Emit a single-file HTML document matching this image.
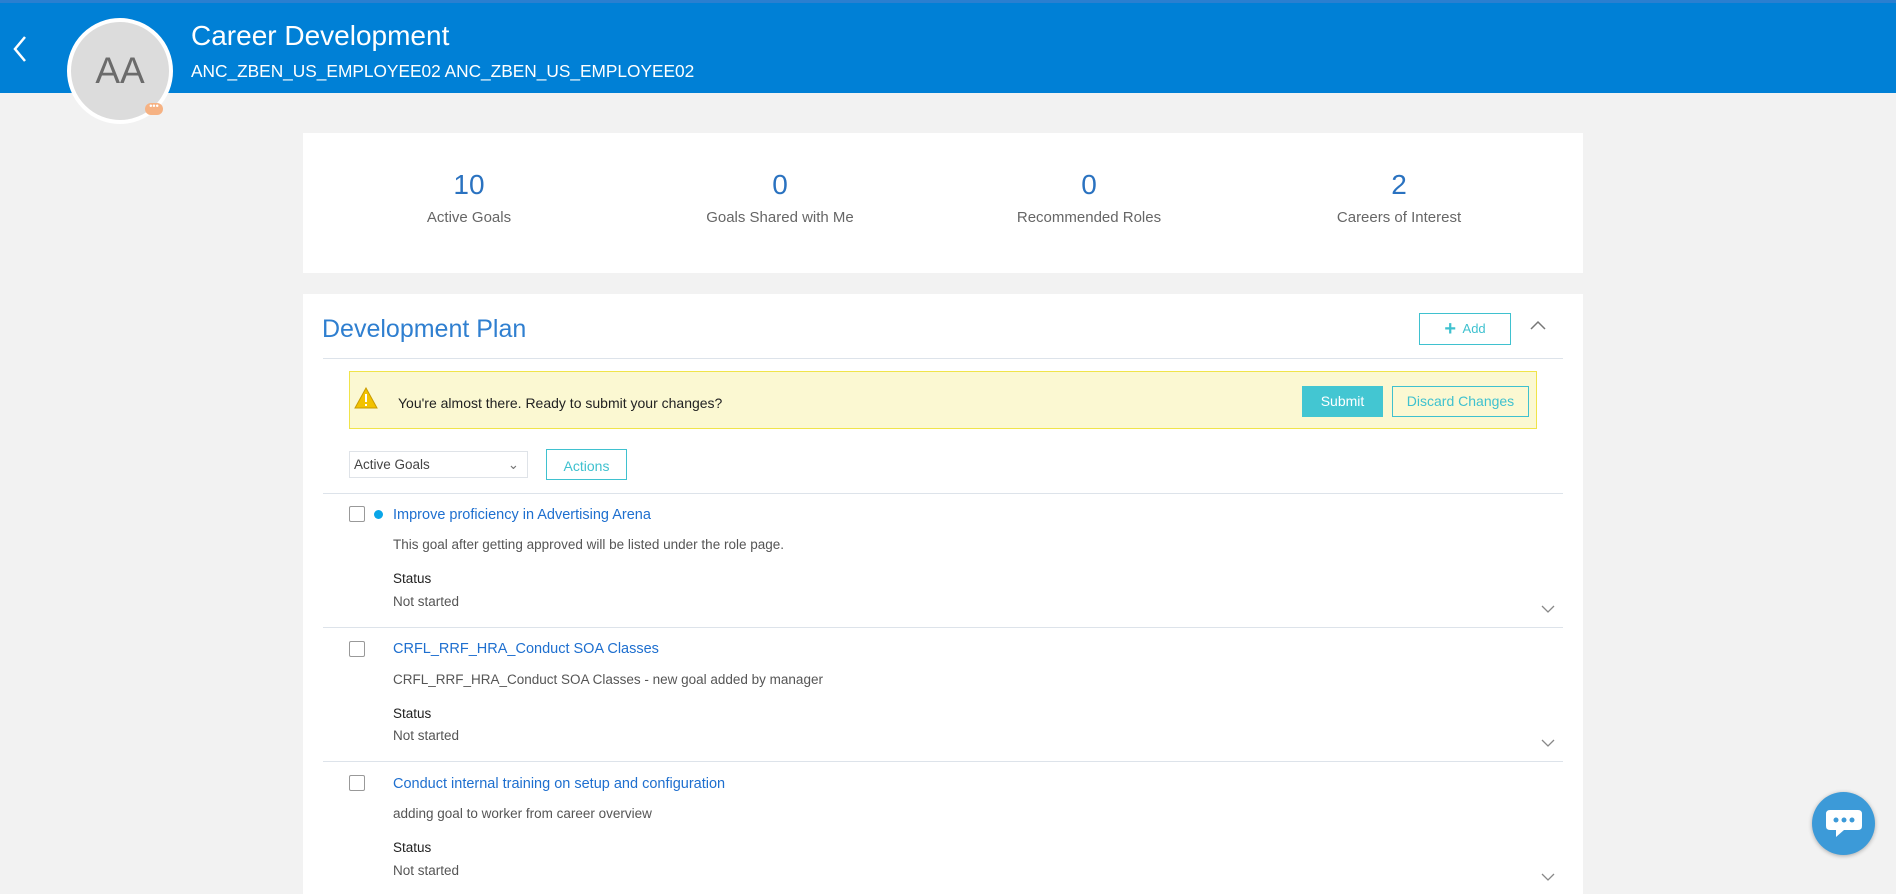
<!DOCTYPE html><html><head><style>
*{margin:0;padding:0;box-sizing:border-box}
body{width:1896px;height:882px;overflow:hidden;background:#f2f2f2;font-family:"Liberation Sans",sans-serif;position:relative}
.a{position:absolute}
.hdr{left:0;top:0;width:1896px;height:93px;background:#0080d6;border-top:3px solid #2a7fd0}
.stat{width:300px;text-align:center}
.num{font-size:28px;color:#2a72c0}
.lab{font-size:15px;color:#666;margin-top:8px}
.cb{width:16px;height:16px;border:1px solid #999;border-radius:2px;background:#fff}
.t{font-size:14.5px;color:#1e6fcf}
.d{font-size:13.5px;color:#555}
.s{font-size:13.5px;color:#222}
.hr{height:1px;background:#dde3ea;left:323px;width:1240px}
</style></head><body>
<div class="a hdr"></div>
<svg class="a" style="left:10px;top:34px" width="20" height="30"><path d="M15 3 L5 15 L15 27" stroke="#fff" stroke-width="2.5" fill="none"/></svg>
<div class="a" style="left:67px;top:18px;width:106px;height:106px;border-radius:50%;background:#dcdcdc;border:4px solid #fff;font-size:37px;color:#6b6b6b;text-align:center;line-height:98px">AA</div>
<div class="a" style="left:145px;top:103px;width:18px;height:12px;border-radius:6px;background:#f6b283;color:#fff;font-size:9px;line-height:6px;text-align:center">•••</div>
<div class="a" style="left:191px;top:20px;font-size:28px;color:#fff">Career Development</div>
<div class="a" style="left:191px;top:61px;font-size:17.3px;color:#fff">ANC_ZBEN_US_EMPLOYEE02 ANC_ZBEN_US_EMPLOYEE02</div>

<div class="a" style="left:303px;top:133px;width:1280px;height:140px;background:#fff"></div>
<div class="a stat" style="left:319px;top:169px"><div class="num">10</div><div class="lab">Active Goals</div></div>
<div class="a stat" style="left:630px;top:169px"><div class="num">0</div><div class="lab">Goals Shared with Me</div></div>
<div class="a stat" style="left:939px;top:169px"><div class="num">0</div><div class="lab">Recommended Roles</div></div>
<div class="a stat" style="left:1249px;top:169px"><div class="num">2</div><div class="lab">Careers of Interest</div></div>

<div class="a" style="left:303px;top:294px;width:1280px;height:600px;background:#fff"></div>
<div class="a" style="left:322px;top:315px;font-size:25px;color:#2f7fd0">Development Plan</div>
<div class="a" style="left:1419px;top:313px;width:92px;height:32px;border:1px solid #3fc1cf;color:#3fc1cf;font-size:13px;line-height:30px;text-align:center"><b style="font-size:20px;vertical-align:-2px">+</b>&nbsp; Add</div>
<svg class="a" style="left:1529px;top:319px" width="18" height="12"><path d="M2 10 L9 3 L16 10" stroke="#777" stroke-width="1.5" fill="none"/></svg>
<div class="a hr" style="top:358px"></div>
<div class="a" style="left:349px;top:371px;width:1188px;height:58px;background:#fbf8d2;border:1px solid #f0e44a"></div>
<svg class="a" style="left:354px;top:387px" width="24" height="22"><path d="M12 1 L23 21 L1 21 Z" fill="#f2c200" stroke="#c99b00"/><rect x="11" y="7" width="2" height="8" fill="#fff"/><rect x="11" y="17" width="2" height="2" fill="#fff"/></svg>
<div class="a s" style="left:398px;top:395px;font-size:14px">You're almost there. Ready to submit your changes?</div>
<div class="a" style="left:1302px;top:386px;width:81px;height:31px;background:#43c6d2;color:#fff;font-size:14px;line-height:31px;text-align:center">Submit</div>
<div class="a" style="left:1392px;top:386px;width:137px;height:31px;border:1px solid #3fc1cf;color:#3fc1cf;font-size:14px;line-height:29px;text-align:center">Discard Changes</div>
<div class="a" style="left:349px;top:451px;width:179px;height:27px;border:1px solid #dfe3e8;font-size:13.5px;color:#444;line-height:25px;padding-left:4px">Active Goals<span style="position:absolute;right:8px;color:#777">&#8964;</span></div>
<div class="a" style="left:546px;top:449px;width:81px;height:31px;border:1px solid #3fc1cf;color:#3fc1cf;font-size:14px;line-height:33px;text-align:center">Actions</div>
<div class="a hr" style="top:493px"></div>

<div class="a cb" style="left:349px;top:506px"></div>
<div class="a" style="left:374px;top:510px;width:9px;height:9px;border-radius:50%;background:#0aa6e8"></div>
<div class="a t" style="left:393px;top:507px">Improve proficiency in Advertising Arena</div>
<div class="a d" style="left:393px;top:537px">This goal after getting approved will be listed under the role page.</div>
<div class="a s" style="left:393px;top:571px">Status</div>
<div class="a d" style="left:393px;top:594px">Not started</div>
<svg class="a" style="left:1540px;top:604px" width="16" height="10"><path d="M2 2 L8 8 L14 2" stroke="#888" stroke-width="1.3" fill="none"/></svg>
<div class="a hr" style="top:627px"></div>

<div class="a cb" style="left:349px;top:641px"></div>
<div class="a t" style="left:393px;top:641px">CRFL_RRF_HRA_Conduct SOA Classes</div>
<div class="a d" style="left:393px;top:672px">CRFL_RRF_HRA_Conduct SOA Classes - new goal added by manager</div>
<div class="a s" style="left:393px;top:706px">Status</div>
<div class="a d" style="left:393px;top:728px">Not started</div>
<svg class="a" style="left:1540px;top:738px" width="16" height="10"><path d="M2 2 L8 8 L14 2" stroke="#888" stroke-width="1.3" fill="none"/></svg>
<div class="a hr" style="top:761px"></div>

<div class="a cb" style="left:349px;top:775px"></div>
<div class="a t" style="left:393px;top:776px">Conduct internal training on setup and configuration</div>
<div class="a d" style="left:393px;top:806px">adding goal to worker from career overview</div>
<div class="a s" style="left:393px;top:840px">Status</div>
<div class="a d" style="left:393px;top:863px">Not started</div>
<svg class="a" style="left:1540px;top:872px" width="16" height="10"><path d="M2 2 L8 8 L14 2" stroke="#888" stroke-width="1.3" fill="none"/></svg>

<div class="a" style="left:1812px;top:792px;width:63px;height:63px;border-radius:50%;background:#3c9ad8;box-shadow:0 1px 4px rgba(0,0,0,.3)"></div>
<svg class="a" style="left:1824px;top:807px" width="40" height="34"><path d="M6 3 H34 Q38 3 38 7 V19 Q38 23 34 23 H20 L12 30 V23 H6 Q2 23 2 19 V7 Q2 3 6 3Z" fill="#fff"/><circle cx="12" cy="13" r="2.5" fill="#3c9ad8"/><circle cx="20" cy="13" r="2.5" fill="#3c9ad8"/><circle cx="28" cy="13" r="2.5" fill="#3c9ad8"/></svg>
</body></html>
